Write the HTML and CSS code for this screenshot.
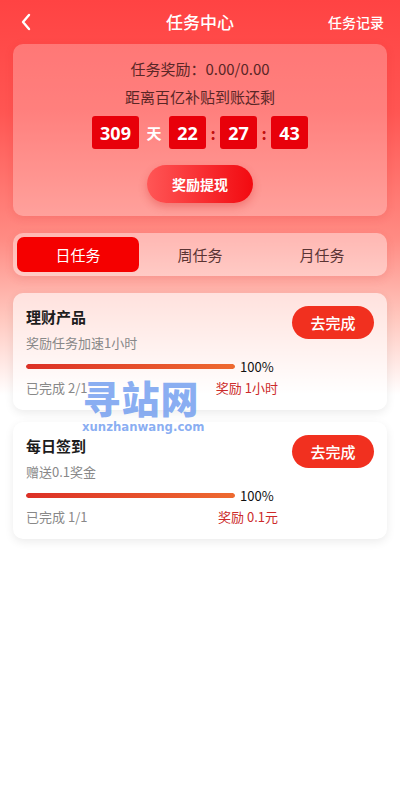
FILE: index.html
```html
<!DOCTYPE html>
<html lang="zh">
<head>
<meta charset="utf-8">
<title>任务中心</title>
<link rel="stylesheet" href="styles.css">
</head>
<body>
<div class="page">
  <header class="nav">
    <svg class="back" width="12" height="18" viewBox="0 0 12 18"><path d="M9 2 L3 9 L9 16" fill="none" stroke="#fff" stroke-width="2.4" stroke-linecap="round" stroke-linejoin="round"/></svg>
    <h1 class="nav-title">任务中心</h1>
    <span class="nav-right">任务记录</span>
  </header>

  <section class="summary">
    <p class="sum-line">任务奖励：0.00/0.00</p>
    <p class="sum-line">距离百亿补贴到账还剩</p>
    <div class="countdown">
      <span class="cd-box cd-wide">309</span>
      <span class="cd-sep cd-day">天</span>
      <span class="cd-box">22</span>
      <span class="cd-sep">:</span>
      <span class="cd-box">27</span>
      <span class="cd-sep">:</span>
      <span class="cd-box">43</span>
    </div>
    <button class="withdraw">奖励提现</button>
  </section>

  <nav class="tabs">
    <span class="tab active">日任务</span>
    <span class="tab">周任务</span>
    <span class="tab">月任务</span>
  </nav>

  <section class="task">
    <div class="task-main">
      <div class="task-title">理财产品</div>
      <div class="task-desc">奖励任务加速1小时</div>
      <div class="progress-row">
        <div class="bar"><div class="bar-fill" style="width:100%"></div></div>
        <span class="pct">100%</span>
      </div>
      <div class="task-foot">
        <span>已完成 2/1</span>
        <span class="reward">奖励 1小时</span>
      </div>
    </div>
    <button class="go">去完成</button>
  </section>

  <section class="task task2">
    <div class="task-main">
      <div class="task-title">每日签到</div>
      <div class="task-desc">赠送0.1奖金</div>
      <div class="progress-row">
        <div class="bar"><div class="bar-fill" style="width:100%"></div></div>
        <span class="pct">100%</span>
      </div>
      <div class="task-foot">
        <span>已完成 1/1</span>
        <span class="reward">奖励 0.1元</span>
      </div>
    </div>
    <button class="go">去完成</button>
  </section>

  <div class="watermark">
    <div class="wm-big">寻站网</div>
    <div class="wm-small">xunzhanwang.com</div>
  </div>
</div>
</body>
</html>
```

FILE: styles.css
```css
* { box-sizing: border-box; }
html, body { margin: 0; padding: 0; }
body {
  font-family: "Noto Sans CJK SC", "Noto Sans", sans-serif;
  background: #fff;
}
.page {
  position: relative;
  width: 400px;
  min-height: 800px;
  padding: 0 13px;
  background: linear-gradient(180deg, #ff4343 0px, #ff5552 110px, #ff8c84 240px, #ffc9c0 320px, #ffffff 395px, #ffffff 800px);
}
.nav {
  position: relative;
  height: 44px;
  display: flex;
  align-items: center;
  justify-content: center;
}
.back {
  position: absolute;
  left: 7px;
  top: 13px;
}
.nav-title {
  margin: 0;
  font-size: 17px;
  font-weight: 500;
  color: #fff;
  line-height: 24px;
}
.nav-right {
  position: absolute;
  right: 3px;
  top: 11px;
  font-size: 14px;
  font-weight: 500;
  color: #fff;
  line-height: 22px;
}
.summary {
  background: rgba(255, 255, 255, 0.25);
  border-radius: 10px;
  padding: 14px 0 13px;
  display: flex;
  flex-direction: column;
  align-items: center;
  box-shadow: 0 2px 8px rgba(200, 40, 40, 0.15);
}
.sum-line {
  margin: 0;
  font-size: 15px;
  line-height: 22px;
  color: #5a2626;
}
.sum-line + .sum-line { margin-top: 6px; }
.countdown {
  margin-top: 8px;
  display: flex;
  align-items: center;
  height: 33px;
}
.cd-box {
  width: 37px;
  height: 33px;
  border-radius: 3px;
  background: #e8000a;
  color: #fff;
  font-size: 18px;
  font-weight: 700;
  display: flex;
  align-items: center;
  justify-content: center;
  font-family: "Noto Sans", "Noto Sans CJK SC", sans-serif;
}
.cd-wide { width: 47px; }
.cd-sep {
  width: 14px;
  text-align: center;
  color: #c01010;
  font-size: 16px;
  font-weight: 700;
}
.cd-day {
  width: 30px;
  color: #fff;
  font-size: 15px;
}
.withdraw {
  margin-top: 16px;
  width: 106px;
  height: 38px;
  border: none;
  border-radius: 19px;
  background: linear-gradient(90deg, #ff5656, #f20a10);
  color: #fff;
  font-family: inherit;
  font-size: 14px;
  font-weight: 700;
  box-shadow: 0 4px 8px rgba(210, 30, 30, 0.3);
}
.tabs {
  margin-top: 17px;
  height: 43px;
  padding: 4px;
  border-radius: 10px;
  background: rgba(255, 255, 255, 0.4);
  display: flex;
  box-shadow: 0 3px 8px rgba(200, 60, 60, 0.15);
}
.tab {
  flex: 1;
  display: flex;
  align-items: center;
  justify-content: center;
  font-size: 15px;
  color: #5a3434;
  border-radius: 7px;
}
.tab.active {
  background: #f50000;
  color: #fff;
}
.task {
  margin-top: 17px;
  height: 117px;
  border-radius: 10px;
  background: rgba(255, 255, 255, 0.6);
  box-shadow: 0 3px 10px rgba(0, 0, 0, 0.08);
  padding: 13px 13px 0 13px;
  display: flex;
  justify-content: space-between;
  align-items: flex-start;
}
.task2 { margin-top: 12px; background: #fff; }
.task-main { width: 252px; }
.task-title {
  font-size: 15px;
  font-weight: 700;
  color: #1c1c1c;
  line-height: 22px;
}
.task-desc {
  margin-top: 4px;
  font-size: 13px;
  color: #888;
  line-height: 22px;
}
.progress-row {
  margin-top: 2px;
  display: flex;
  align-items: center;
  height: 20px;
}
.bar {
  width: 209px;
  height: 5px;
  border-radius: 3px;
  background: #eee;
  overflow: hidden;
}
.bar-fill {
  height: 100%;
  border-radius: 3px;
  background: linear-gradient(90deg, #dc3026, #ee6a30);
}
.pct {
  margin-left: 5px;
  font-size: 13px;
  color: #111;
}
.task-foot {
  margin-top: 2px;
  display: flex;
  justify-content: space-between;
  font-size: 13px;
  line-height: 20px;
  color: #888;
}
.reward { color: #cc2a2a; }
.go {
  margin-top: 0;
  width: 82px;
  height: 33px;
  border: none;
  border-radius: 17px;
  background: #f1301f;
  color: #fff;
  font-family: inherit;
  font-size: 15px;
  font-weight: 500;
}
.watermark {
  position: absolute;
  left: 82px;
  top: 376px;
  width: 118px;
  text-align: center;
  color: rgba(100, 148, 238, 0.75);
  pointer-events: none;
}
.wm-big {
  font-size: 38px;
  font-weight: 900;
  letter-spacing: 1px;
  line-height: 42px;
}
.wm-small {
  font-family: "DejaVu Sans Condensed", "DejaVu Sans", sans-serif;
  font-size: 13px;
  font-weight: 700;
  line-height: 14px;
  margin-top: 2px;
}
```
